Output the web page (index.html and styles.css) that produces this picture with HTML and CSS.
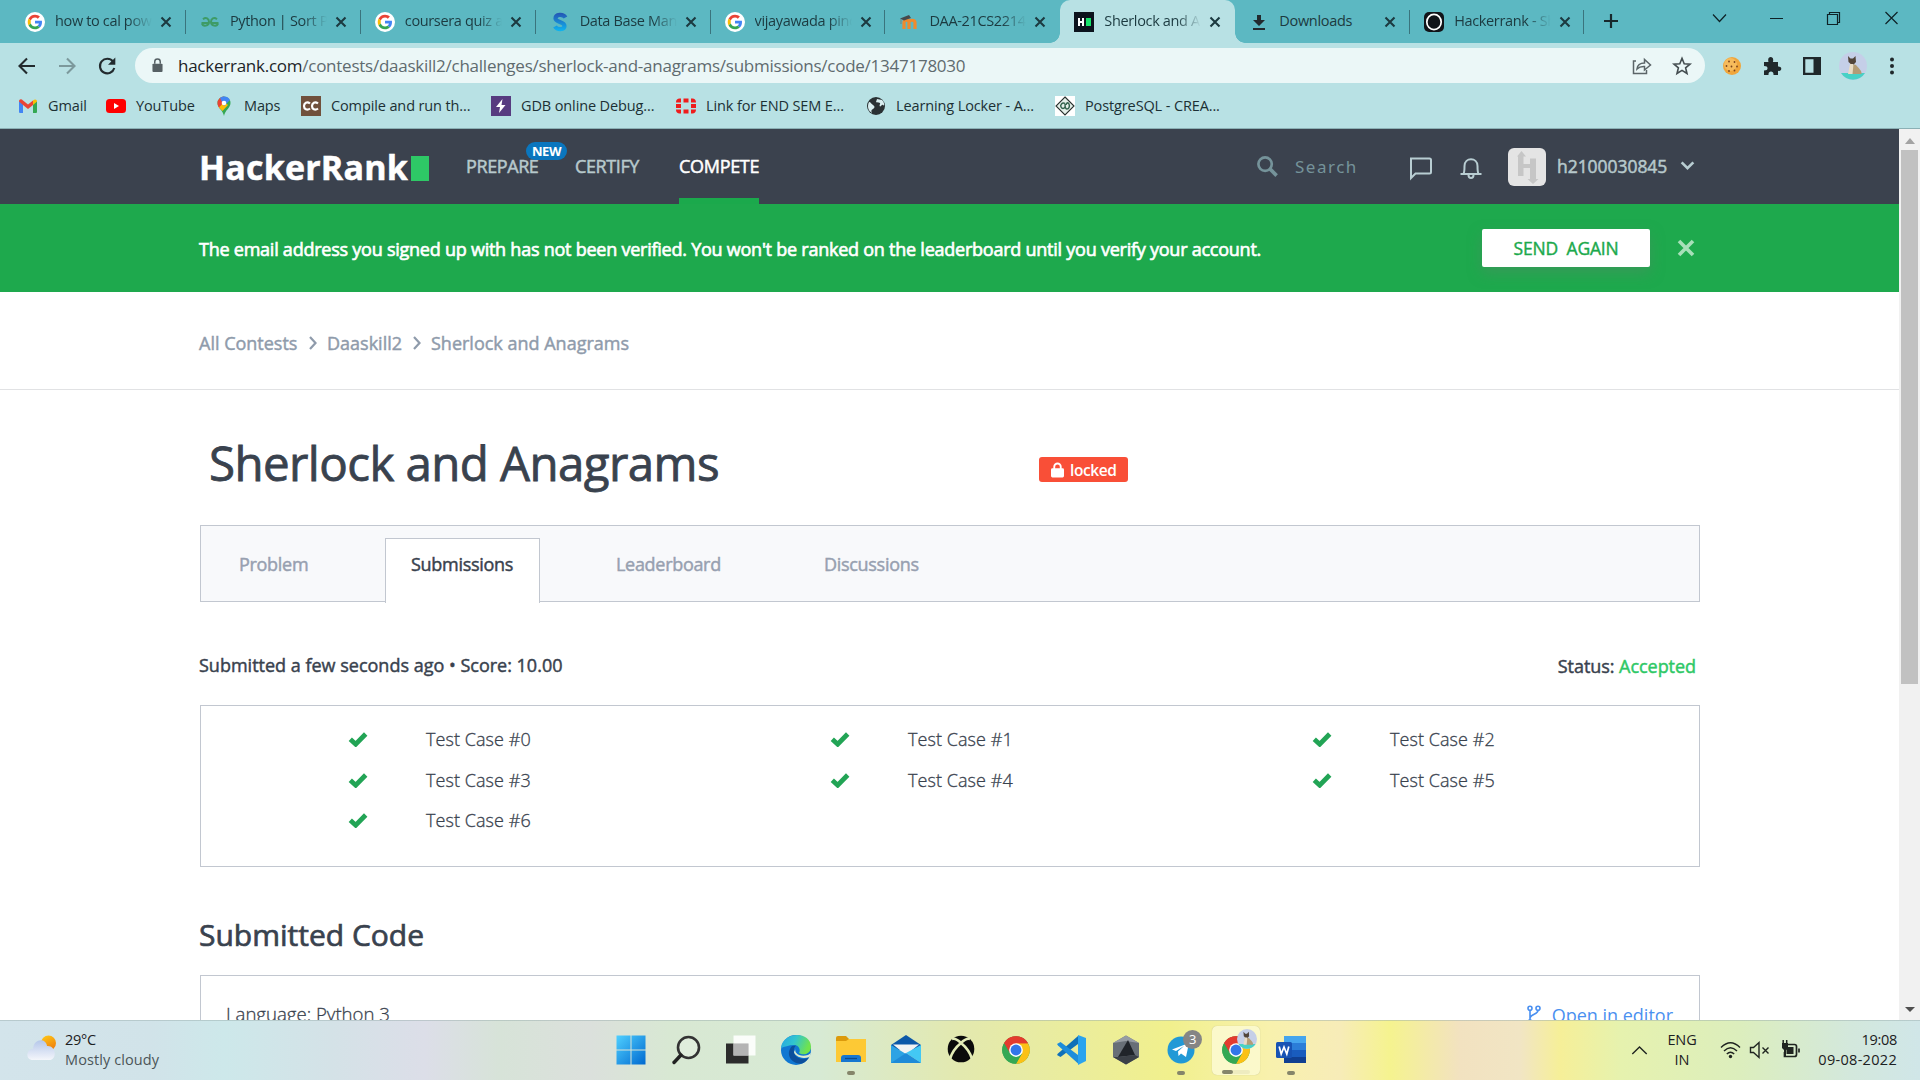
FILE: index.html
```html
<!DOCTYPE html>
<html lang="en">
<head>
<meta charset="utf-8">
<title>Sherlock and Anagrams</title>
<link rel="stylesheet" href="styles.css">
</head>
<body>
<svg class="defs" width="0" height="0" aria-hidden="true">
  <defs>
    <symbol id="x" viewBox="0 0 12 12"><path d="M1.5 1.5l9 9M10.5 1.5l-9 9" stroke="#1c3a40" stroke-width="2.1"/></symbol>
    <symbol id="google" viewBox="0 0 48 48"><circle cx="24" cy="24" r="24" fill="#fff"/><g transform="translate(6.5 6.5) scale(.73)"><path fill="#EA4335" d="M24 9.5c3.54 0 6.71 1.22 9.21 3.6l6.85-6.85C35.9 2.38 30.47 0 24 0 14.62 0 6.51 5.38 2.56 13.22l7.98 6.19C12.43 13.72 17.74 9.5 24 9.5z"/><path fill="#4285F4" d="M46.98 24.55c0-1.57-.15-3.09-.38-4.55H24v9.02h12.94c-.58 2.96-2.26 5.48-4.78 7.18l7.73 6c4.51-4.18 7.09-10.36 7.09-17.65z"/><path fill="#FBBC05" d="M10.53 28.59c-.48-1.45-.76-2.99-.76-4.59s.27-3.14.76-4.59l-7.98-6.19C.92 16.46 0 20.12 0 24c0 3.88.92 7.54 2.56 10.78l7.97-6.19z"/><path fill="#34A853" d="M24 48c6.48 0 11.93-2.13 15.89-5.81l-7.73-6c-2.15 1.45-4.92 2.3-8.16 2.3-6.26 0-11.57-4.22-13.47-9.91l-7.98 6.19C6.51 42.62 14.62 48 24 48z"/></g></symbol>
    <symbol id="check" viewBox="0 0 20 16"><path d="M2.3 8.2l5.4 5L17.700 3" fill="none" stroke="#22a455" stroke-width="4.8"/></symbol>
    <symbol id="chrome" viewBox="0 0 48 48"><circle cx="24" cy="24" r="22" fill="#34a853"/><path fill="#e33b2e" d="M24 24L4.9 13A22 22 0 0 1 43.1 13z"/><path fill="#fbc116" d="M24 13h19.1A22 22 0 0 1 24 46l9.5-16.5z"/><path fill="#e33b2e" d="M4.9 13L14.5 29.500 24 13h19.100A22 22 0 0 0 4.900 13z"/><path fill="#34a853" d="M4.900 13L14.500 29.500 24 34l9.500-4.500L24 46A22 22 0 0 1 4.900 13z"/><circle cx="24" cy="24" r="11" fill="#fff"/><circle cx="24" cy="24" r="8.700" fill="#3276e8"/></symbol>
    <symbol id="dog" viewBox="0 0 28 28"><circle cx="14" cy="14" r="14" fill="#c5cfe8"/><path d="M2 21h24a14 14 0 0 1-24 0z" fill="#48d1c6"/><path d="M11 11l6 2c2 3 6 5 5.500 9H11z" fill="#b39c76"/><path d="M9 4l2.500 2.500h2.500L16.500 4l.5 6-3.300 3.500L9.500 10z" fill="#51443a"/><path d="M11 12h3.500l-1 10H9z" fill="#e8dcc6"/></symbol>
  </defs>
</svg>

<header class="tabstrip">
  <div class="tab"><svg class="fav"><use href="#google"/></svg><span class="tt">how to cal power</span><svg class="cl"><use href="#x"/></svg></div>
  <div class="tab"><svg class="fav" viewBox="0 0 20 20"><g fill="none" stroke="#3e9b66" stroke-width="2"><path d="M9.500 11H1.500M3 7.200c3-2.400 6-.6 6 2.800 0 4.200-6 5-7 1.500M10.500 11h8M17 7.200c-3-2.400-6-.6-6 2.800 0 4.200 6 5 7 1.500"/></g></svg><span class="tt">Python | Sort Python</span><svg class="cl"><use href="#x"/></svg></div>
  <div class="tab"><svg class="fav"><use href="#google"/></svg><span class="tt">coursera quiz answers</span><svg class="cl"><use href="#x"/></svg></div>
  <div class="tab"><svg class="fav" viewBox="0 0 20 20"><path d="M15.500 5.500C13 1.500 5.500 2 5.500 6.500c0 4 9 3 9 7.500 0 4-7.500 4-9.500.5" fill="none" stroke="url(#sg)" stroke-width="4.200"/><defs><linearGradient id="sg" gradientUnits="userSpaceOnUse" x1="10" y1="1" x2="10" y2="19"><stop stop-color="#2456b4"/><stop offset="1" stop-color="#0fb4ef"/></linearGradient></defs></svg><span class="tt">Data Base Management</span><svg class="cl"><use href="#x"/></svg></div>
  <div class="tab"><svg class="fav"><use href="#google"/></svg><span class="tt">vijayawada pincode</span><svg class="cl"><use href="#x"/></svg></div>
  <div class="tab last-before"><svg class="fav" viewBox="0 0 20 20"><path d="M5 17V10.500c0-3 5-3 5 0V17m0-6.500c0-3 6-3 6 0V17" fill="none" stroke="#f08a2c" stroke-width="3.200"/><path d="M1 6.500l9-3.500 2 3-7 2.500z" fill="#46494d"/><path d="M2 7v5" stroke="#77817a"/></svg><span class="tt">DAA-21CS2214-AI</span><svg class="cl"><use href="#x"/></svg></div>
  <div class="tab active"><svg class="fav" viewBox="0 0 20 20"><path fill="#0c131d" d="M0 0h20v20H0z"/><path d="M5 6v8M9 6v8M5 10h4" stroke="#fff" stroke-width="2"/><path fill="#17e36b" d="M12 6h5v8h-5z"/></svg><span class="tt">Sherlock and Anagrams</span><svg class="cl"><use href="#x"/></svg></div>
  <div class="tab"><svg class="fav" viewBox="0 0 20 20"><path d="M8 3h4v5h4l-6 6-6-6h4zM4 16h12v2H4z" fill="#222a2e"/></svg><span class="tt full">Downloads</span><svg class="cl"><use href="#x"/></svg></div>
  <div class="tab"><svg class="fav" viewBox="0 0 20 20"><rect width="20" height="20" rx="5" fill="#111419"/><ellipse cx="10" cy="10" rx="7.200" ry="7.600" fill="#111419" stroke="#fff" stroke-width="1.700"/></svg><span class="tt">Hackerrank - Sherlock</span><svg class="cl"><use href="#x"/></svg></div>
  <svg class="plus" viewBox="0 0 16 16"><path d="M8 1v14M1 8h14" stroke="#17282c" stroke-width="2.200"/></svg>
  <svg class="win" viewBox="0 0 230 20" fill="none" stroke="#0e2226" stroke-width="1.200"><path d="M23 6.500l6.500 7 6.500-7M80 10.500h13M195.500 4l12 12M207.500 4l-12 12"/><path d="M137.500 6.500h10v10h-10zM139.500 6V4.500h10v10h-2"/></svg>
</header>

<div class="toolbar">
  <svg class="nav" viewBox="0 0 20 20"><path d="M18 10H3M10 2.500L2.500 10l7.500 7.500" fill="none" stroke="#222b2e" stroke-width="2.100"/></svg>
  <svg class="nav" viewBox="0 0 20 20"><path d="M2 10h15M10 2.500l7.500 7.500-7.500 7.500" fill="none" stroke="#7c999c" stroke-width="2.100"/></svg>
  <svg class="nav" viewBox="0 0 20 20"><path d="M16 5.500A7.300 7.300 0 1 0 17.300 12" fill="none" stroke="#222b2e" stroke-width="2.100"/><path d="M18.300 1.500v7.300H11z" fill="#222b2e"/></svg>
  <div class="omni">
    <svg class="lock" viewBox="0 0 12 16"><rect x="0.500" y="6" width="11" height="9" rx="1" fill="#566064"/><path d="M3 6V4a3 3 0 0 1 6 0v2" fill="none" stroke="#566064" stroke-width="1.600"/></svg>
    <span class="url"><b>hackerrank.com</b>/contests/daaskill2/challenges/sherlock-and-anagrams/submissions/code/1347178030</span>
    <svg class="oi" viewBox="0 0 20 20" fill="none" stroke="#5b6568" stroke-width="1.500"><path d="M4 5H1.500v12.500h13V14M5 13c.5-4.500 3-6 7.500-6V3.500L18.500 9l-6 5v-3.500C9.500 10.300 7 11 5 13z"/></svg>
    <svg class="oi" viewBox="0 0 20 20" fill="none" stroke="#444d50" stroke-width="1.600"><path d="M10 2.300l2.200 5.400 5.800.4-4.400 3.700 1.400 5.700-5-3.100-5 3.100 1.400-5.700L2 8.100l5.800-.4z"/></svg>
  </div>
  <svg class="ext" viewBox="0 0 20 20"><circle cx="10" cy="10" r="9" fill="#f0a63c"/><circle cx="8.500" cy="8.500" r="6.500" fill="#f6bb5c"/><g fill="#7a431c"><circle cx="7" cy="5.500" r=".9"/><circle cx="12.500" cy="6" r=".9"/><circle cx="4.500" cy="10" r=".9"/><circle cx="9.500" cy="10.500" r=".9"/><circle cx="15" cy="10.500" r=".9"/><circle cx="7" cy="15" r=".9"/><circle cx="12.500" cy="14.500" r=".9"/></g></svg>
  <svg class="ext" viewBox="0 0 20 20"><path d="M2 6h4.500C5.500 2.500 7 1 8.700 1s3.200 1.500 2.200 5H16v4.500c2 0 3.300.8 3.300 2.200S18 15 16 15v4h-4.500c.2-2.500-1-3.500-2.500-3.500S6.300 16.500 6.500 19H2v-4.500c2.500 0 3.500-1 3.500-2.300S4.500 10 2 10z" fill="#20282b"/></svg>
  <svg class="ext" viewBox="0 0 20 20"><path fill-rule="evenodd" d="M1 1h18v18H1zM3.300 3.300v13.400h8.200V3.300z" fill="#20282b"/></svg>
  <svg class="ava"><use href="#dog"/></svg>
  <svg class="ext" viewBox="0 0 20 20" fill="#20282b"><circle cx="10" cy="3.500" r="2"/><circle cx="10" cy="10" r="2"/><circle cx="10" cy="16.500" r="2"/></svg>
</div>

<nav class="bookmarks">
  <a><svg viewBox="0 0 20 20"><path fill="#4285f4" d="M1 5l4 3v9H2a1 1 0 0 1-1-1z"/><path fill="#34a853" d="M19 5l-4 3v9h3a1 1 0 0 0 1-1z"/><path fill="#fbbc04" d="M15 4.500C17 2.500 19 3.500 19 5.500L15 9z"/><path fill="#ea4335" d="M5 4.500l5 4 5-4V9l-5 4-5-4-4-3.500C1 3 3.500 2.700 5 4.500z"/></svg>Gmail</a>
  <a><svg viewBox="0 0 20 20"><rect y="3" width="20" height="14" rx="3.500" fill="#f00"/><path d="M8 7l5 3-5 3z" fill="#fff"/></svg>YouTube</a>
  <a><svg viewBox="0 0 20 20"><path d="M10 20C9 14 3.500 12 3.500 7a6.500 6.500 0 0 1 13 0c0 5-5.500 7-6.500 13z" fill="#34a853"/><path d="M3.500 7A6.500 6.500 0 0 1 10 .5L10 7l-4.500 5.500C4.200 10.500 3.500 9 3.500 7z" fill="#ea4335"/><path d="M5 11.500L10 6l4 3-5.500 6z" fill="#fbbc04"/><path d="M6 2C9-.5 14 0 16 4l-6 6z" fill="#4285f4"/><circle cx="10" cy="7" r="2.300" fill="#fff"/></svg>Maps</a>
  <a><svg viewBox="0 0 20 20"><path fill="#70503c" d="M0 0h20v20H0z"/><path d="M9 7.500C6 5 3 7 3 10s3 5 6 2.500M17 7.500C14 5 11 7 11 10s3 5 6 2.500" fill="none" stroke="#fff" stroke-width="2.200"/></svg>Compile and run th...</a>
  <a><svg viewBox="0 0 20 20"><path fill="#573b80" d="M0 0h20v20H0z"/><path fill="#fff" d="M11.500 3L5 11h4l-1 6 6.500-8h-4z"/></svg>GDB online Debug...</a>
  <a><svg viewBox="0 0 20 20"><path fill="#ee1c1c" d="M0 8h5v4H0zM15 8h5v4h-5zM7.500 2.500h5v4h-5zM7.500 13.500h5v4h-5zM0 6c0-2 1.500-3.500 3.500-3.500H5v4H0zM0 13.500h5v4H3.500C1.500 17.500 0 16 0 14zM15 2.500h1.500C18.500 2.500 20 4 20 6.500h-5zM15 13.500h5c0 2.500-1.500 4-3.500 4H15z"/></svg>Link for END SEM E...</a>
  <a><svg viewBox="0 0 20 20"><circle cx="10" cy="10" r="9" fill="#2a3134"/><path fill="#d9eef0" d="M3 6c2 0 2 2 4 3s2 3 0 4-2 2-1 4C2 15 1 10 3 6zM11 3l5 1c2 2 2.500 4 2 6-1-2-2-1-3 0s-2 0-1-2-3-1-4-2z"/></svg>Learning Locker - A...</a>
  <a><svg viewBox="0 0 20 20"><path fill="#fff" d="M0 0h20v20H0z"/><path d="M10 1l9 9-9 9-9-9z" fill="#e4efe9" stroke="#28312e" stroke-width="1.100"/><path d="M10 7.500C7 6 5 9 6 11s3 2 4 0m0-3c0 3 0 5 2 5s3-3 2-5-3-1-3 1" fill="none" stroke="#35644e" stroke-width="1.500"/></svg>PostgreSQL - CREA...</a>
</nav>

<div class="view">
  <main class="page">
    <div class="hr-nav">
      <div class="logo"><span>HackerRank</span><i></i></div>
      <div class="menu"><a>PREPARE<em>NEW</em></a><a>CERTIFY</a><a class="on">COMPETE</a></div>
      <div class="search"><svg viewBox="0 0 24 24"><circle cx="9.500" cy="9.500" r="7" fill="none" stroke="#75939a" stroke-width="2.800"/><path d="M14.500 14.500l7 7" stroke="#75939a" stroke-width="3.800"/></svg><span>Search</span></div>
      <svg class="ic chat" viewBox="0 0 24 24"><path d="M2 2.500h18.500a1.500 1.500 0 0 1 1.500 1.500v12a1.500 1.500 0 0 1-1.500 1.500H6.500L2 22z" fill="none" stroke="#b8cdd2" stroke-width="2"/></svg>
      <svg class="ic bell" viewBox="0 0 24 24" fill="none" stroke="#b8cdd2" stroke-width="2"><path d="M1.500 18h21M4.500 18c1-2 1-4 1-8 0-9 13-9 13 0 0 4 0 6 1 8M9.500 19c0 4 5 4 5 0"/></svg>
      <svg class="pic" viewBox="0 0 38 38"><rect width="38" height="38" rx="6" fill="#e4e4e4"/><g fill="#c6c6c6"><path d="M9 8.500L13.500 3 18 8.500H15.500V16H22V10.500h6V31h2.500L25 36 19.500 31H22V20h-6.500v8H10V8.500z"/></g></svg>
      <span class="user">h2100030845</span>
      <svg class="caret" viewBox="0 0 16 10"><path d="M1.500 1.500L8 8l6.500-6.500" fill="none" stroke="#b8cdd2" stroke-width="2.900"/></svg>
    </div>
    <div class="banner">
      <p>The email address you signed up with has not been verified. You won't be ranked on the leaderboard until you verify your account.</p>
      <button>SEND&nbsp; AGAIN</button>
      <svg viewBox="0 0 18 18"><path d="M2 2l14 14M16 2L2 16" stroke="#a7e0b9" stroke-width="3.600"/></svg>
    </div>
    <div class="crumbs">
      <a>All Contests</a><svg viewBox="0 0 8 14"><path d="M1 1l5.500 6L1 13" fill="none" stroke="#8f9bab" stroke-width="2.200"/></svg>
      <a>Daaskill2</a><svg viewBox="0 0 8 14"><path d="M1 1l5.500 6L1 13" fill="none" stroke="#8f9bab" stroke-width="2.200"/></svg>
      <a>Sherlock and Anagrams</a>
    </div>
    <div class="title">
      <h1>Sherlock and Anagrams</h1>
      <span class="locked"><svg viewBox="0 0 14 16"><rect y="6" width="14" height="10" rx="1.500" fill="#fff"/><path d="M3.500 7V4.500a3.500 3.500 0 0 1 7 0V7" fill="none" stroke="#fff" stroke-width="2"/></svg><span>locked</span></span>
    </div>
    <div class="ptabs"><a>Problem</a><a class="on">Submissions</a><a>Leaderboard</a><a>Discussions</a></div>
    <div class="meta"><span class="sub">Submitted a few seconds ago • Score: 10.00</span><span class="status">Status: <b>Accepted</b></span></div>
    <div class="cases">
      <div><svg><use href="#check"/></svg>Test Case #0</div><div><svg><use href="#check"/></svg>Test Case #1</div><div><svg><use href="#check"/></svg>Test Case #2</div>
      <div><svg><use href="#check"/></svg>Test Case #3</div><div><svg><use href="#check"/></svg>Test Case #4</div><div><svg><use href="#check"/></svg>Test Case #5</div>
      <div><svg><use href="#check"/></svg>Test Case #6</div>
    </div>
    <h2>Submitted Code</h2>
    <div class="code"><span class="langname">Language: Python 3</span><a><svg viewBox="0 0 14 20" fill="none" stroke="#4a90f0" stroke-width="1.600"><circle cx="3" cy="3.300" r="2"/><circle cx="11" cy="3.300" r="2"/><circle cx="3" cy="17" r="2"/><path d="M3 5.500V15M11 5.500c0 4-8 3.500-8 8"/></svg><span>Open in editor</span></a></div>
  </main>
  <aside class="scroll"><i class="up"></i><i class="thumb"></i><i class="down"></i></aside>
</div>

<footer class="taskbar">
  <svg class="weather" viewBox="0 0 30 26"><defs><linearGradient id="sun" x2=".5" y2="1"><stop stop-color="#ffcc18"/><stop offset="1" stop-color="#f0820e"/></linearGradient><linearGradient id="cl" x2="0" y2="1"><stop stop-color="#b5c7ea"/><stop offset="1" stop-color="#f4f6fb"/></linearGradient></defs><circle cx="21.500" cy="8" r="7.500" fill="url(#sun)"/><path d="M6 25c-8 0-7-11 0-11C7 3 19 3 20 11c9-1 11 14 2 14z" fill="url(#cl)"/></svg>
  <div class="wtext"><span>29°C</span><span class="dim">Mostly cloudy</span></div>
  <div class="apps">
    <div><svg viewBox="0 0 30 30"><defs><linearGradient id="w" x2="1" y2="1"><stop stop-color="#4fd0ff"/><stop offset="1" stop-color="#0069d0"/></linearGradient></defs><path d="M.5.5h14v14H.500zM15.500.5h14v14h-14zM.5 15.500h14v14H.500zM15.500 15.500h14v14h-14z" fill="url(#w)"/></svg></div>
    <div><svg viewBox="0 0 30 30"><circle cx="17.500" cy="12.500" r="10.500" fill="#eef5ea" fill-opacity=".4" stroke="#333" stroke-width="2.600"/><path d="M10 20l-7 7.500" stroke="#222" stroke-width="3.400" stroke-linecap="round"/></svg></div>
    <div><svg viewBox="0 0 30 30"><path fill="#2c2c2c" d="M0 8.500h22.500v20H0z"/><path fill="#fff" d="M7.500.5h22v20h-22z" fill-opacity=".88"/><path fill="#b4b4b4" d="M7.500 8.500h15v12h-15z"/></svg></div>
    <div><svg viewBox="0 0 30 30"><defs><linearGradient id="e" x2="1" y2=".3"><stop stop-color="#25a5e4"/><stop offset=".5" stop-color="#31c5cf"/><stop offset="1" stop-color="#70e34d"/></linearGradient></defs><circle cx="15" cy="15" r="15" fill="#1077d2"/><path d="M0 13C2-4 30-4 30 12c0 7-8 9-12 6 2-3 0-8-5-8S3 12 0 13z" fill="url(#e)"/><path d="M11 11c-8 9 1 19 10 17.500 3-1 5-3 7-6-5 3-14 1-15-5-.5-3 0-5 2-7z" fill="#0d4f9c"/><path d="M15 13c-3 4 3 10 12 7l3-2-1.500 4c-9 3-15-2-15.500-5z" fill="#e0eccf"/></svg></div>
    <div class="run"><svg viewBox="0 0 30 30"><path fill="#dc9a0c" d="M0 3q0-2 2-2h8l3 3v5H0z"/><path fill="#fdc935" d="M0 6h10l3-2h17v23H0z"/><path fill="#1677d0" d="M5 27v-4q0-3 3-3h14q3 0 3 3v4z"/><path d="M9 23.500h12" stroke="#0b4a8c" stroke-width="1.300"/></svg></div>
    <div><svg viewBox="0 0 30 30"><path fill="#0c58a8" d="M0 10L15 0l15 10v5H0z"/><path fill="#f3f3f3" d="M2 9.500h26L15 20z"/><path fill="#2da3e4" d="M0 10l30 18H0z"/><path fill="#43c8f4" d="M30 10v18L15 18z"/><path fill="#1e8bd8" d="M0 28l15-10 15 10z"/></svg></div>
    <div><svg viewBox="0 0 30 30"><circle cx="15" cy="14" r="13.300" fill="#0b0b0b"/><path d="M4 24C6 17 10 12 15 8c5 4 9 9 11 16M6 4c3-1 6 1 9 4 3-3 6-5 9-4" fill="none" stroke="#e3ecb7" stroke-width="2.600"/></svg></div>
    <div><svg viewBox="0 0 30 30"><use href="#chrome"/></svg></div>
    <div><svg viewBox="0 0 30 30"><path fill="#0f70b8" d="M2 18.500L22 1v8L4.500 22 1 20z"/><path fill="#1d8ddb" d="M2 10.500L22 28.500V20L4.500 7 1 9z"/><path fill="#2aa3ee" d="M22 0l8 3v23l-8 4z"/></svg></div>
    <div><svg viewBox="0 0 30 30"><path fill="#686f77" d="M15 .5L28 8v14l-13 7.500L2 22V8z"/><path fill="#969ca3" d="M15 .5L28 8 15 6 2 8z"/><path fill="#20242a" d="M17 5l7 15-17 2z"/><path fill="#3b4047" d="M2 22l5 0 17-2 4 2-13 7.500z"/></svg></div>
    <div class="run"><svg viewBox="0 0 30 30"><circle cx="15" cy="15" r="13.500" fill="#2199d6"/><path fill="#fff" d="M6 14.500L23 8l-3 14-5-3.500-2.500 2.500-.5-4.500 6-5.500-8 5z"/></svg><span class="badge">3</span></div>
    <div class="cur"><svg viewBox="0 0 30 30"><use href="#chrome"/></svg><svg class="mini"><use href="#dog"/></svg></div>
    <div class="run"><svg viewBox="0 0 30 30"><path fill="#45a5ee" d="M8 1h22v7H8z"/><path fill="#2b7dd8" d="M8 8h22v7H8z"/><path fill="#195cbe" d="M8 15h22v7H8z"/><path fill="#103f91" d="M8 22h22v6H8z"/><rect y="7" width="16" height="16" rx="1.500" fill="#1753b4"/><path d="M3.200 11.500l2 7.500L8 12l2.800 7 2-7.500" fill="none" stroke="#fff" stroke-width="1.700"/></svg></div>
  </div>
  <svg class="chev" viewBox="0 0 18 10"><path d="M1 9l8-8 8 8" fill="none" stroke="#1f2420" stroke-width="1.500"/></svg>
  <div class="lang"><span>ENG</span><span>IN</span></div>
  <svg class="tray" viewBox="0 0 78 20" fill="none" stroke="#1f2420" stroke-width="1.400"><path d="M0.500 7.500q9.500-9.500 19 0M3.500 11q6.500-6.500 13 0M6.300 14q3.700-3.700 7.400 0"/><circle cx="10" cy="16.500" r="1.700" fill="#1f2420" stroke="none"/><path d="M30 7.500h3L38.500 2.500v15L33 12.500h-3zM42 7.500l6 6M48 7.500l-6 6"/><path d="M66 4.500h8q2 0 2 2v8q0 2-2 2H64V12M78.500 8.500v4" stroke-width="1.700"/><path fill="#1f2420" d="M66 7h7v7h-7zM61.500 3h6v5l-2 2v6h-2v-6l-2-2z" stroke="none"/><path d="M62.700 0v4M66.200 0v4" stroke-width="1.500"/></svg>
  <div class="clock"><span>19:08</span><span class="date">09-08-2022</span></div>
</footer>
</body>
</html>
```
FILE: styles.css
```css
* { box-sizing: border-box; }
html, body { margin: 0; width: 1920px; height: 1080px; overflow: hidden; }
body { display: flex; flex-direction: column; font-family: "Open Sans", "Noto Sans", sans-serif; color: #39424e; background: #fff; }
svg { display: block; flex: none; overflow: visible; }
.defs { position: absolute; }
span, a { white-space: nowrap; }

/* browser tab strip */
.tabstrip { display: flex; height: 43px; padding-left: 11px; background: #5cb8c2; flex: none; }
.tab { position: relative; display: flex; align-items: center; width: 174.9px; height: 43px; padding-left: 14px; flex: none; }
.tab:not(.active):not(.last-before)::after { content: ""; position: absolute; right: 0; top: 10px; width: 1px; height: 24px; background: #3a747d; }
.tab.active { background: #b8e1e4; border-radius: 10px 10px 0 0; }
.tab.active::before, .tab.active::after { content: ""; position: absolute; bottom: 0; width: 10px; height: 10px; }
.tab.active::before { left: -10px; background: radial-gradient(circle at 0 0, transparent 9.5px, #b8e1e4 10px); }
.tab.active::after { right: -10px; background: radial-gradient(circle at 100% 0, transparent 9.5px, #b8e1e4 10px); }
.fav { width: 20px; height: 20px; margin-right: 10px; }
.tt { width: 97px; height: 24px; line-height: 24px; overflow: hidden; font-size: 14.5px; letter-spacing: -.35px; color: #1c3a40; -webkit-mask-image: linear-gradient(90deg, #000 75%, transparent 100%); margin-bottom: 2px; }
.tt.full { -webkit-mask-image: none; letter-spacing: -.3px; }
.cl { width: 12px; height: 12px; margin-left: 8px; }
.tab:nth-child(9) { width: 174px; }
.plus { width: 16px; height: 16px; margin: 13px 0 0 18.7px; }
.win { width: 230px; height: 20px; margin: 8px 0 0 71px; }

/* address bar */
.toolbar { display: flex; align-items: center; height: 45px; padding: 0 0 0 17px; background: #b8e1e4; flex: none; }
.nav { width: 20px; height: 20px; margin-right: 20px; }
.nav + .nav + .nav { margin-right: 18px; margin-left: 0; }
.omni { display: flex; align-items: center; width: 1570px; height: 35px; border-radius: 18px; background: #ebf7f7; padding-left: 17px; margin-right: 17px; flex: none; }
.lock { width: 11px; height: 15px; margin-right: 15px; }
.url { width: 1454px; flex: none; font-size: 17px; letter-spacing: -.25px; color: #5f6b6f; }
.url b { font-weight: 400; color: #1d2528; }
.oi { width: 20px; height: 20px; margin-right: 20px; }
.ext { width: 20px; height: 20px; margin-right: 20px; }
.ava { width: 28px; height: 28px; margin: 0 15px 0 -3px; }

.bookmarks { display: grid; grid-template-columns: 88px 108px 87px 190px 185px 190px 189px 200px; height: 41px; padding: 0 0 6px 18px; align-items: center; background: #b8e1e4; border-bottom: 1px solid #8bb0b5; flex: none; }
.bookmarks a { display: flex; align-items: center; gap: 10px; font-size: 14.5px; letter-spacing: -.12px; color: #1c3034; }
.bookmarks svg { width: 20px; height: 20px; margin-top: 2px; }

/* page area */
.view { display: flex; height: 891px; overflow: hidden; flex: none; }
.page { width: 1899px; height: 891px; overflow: hidden; flex: none; }
.hr-nav { display: flex; align-items: center; height: 75px; padding-left: 199px; background: #3b424e; }
.logo { display: flex; width: 267px; align-items: center; }
.logo span { width: 212px; font-size: 34px; font-weight: 700; line-height: 40px; letter-spacing: .2px; color: #fff; -webkit-text-stroke: .5px; }
.logo i { width: 18px; height: 25px; background: #2ec866; margin-top: 3px; }
.menu { display: grid; grid-template-columns: 109px 104px 80px; height: 75px; width: 790px; }
.menu a { position: relative; height: 75px; font-size: 18px; line-height: 75px; letter-spacing: -.4px; color: #b7c9cc; -webkit-text-stroke: .5px; }
.menu .on { color: #fff; border-bottom: 6px solid #1ba94c; letter-spacing: -.3px; }
.menu em { position: absolute; left: 60px; top: 13px; width: 41px; height: 18px; border-radius: 9px; background: #0a76be; color: #fff; font: 700 13px/18px "Open Sans", sans-serif; letter-spacing: -.4px; text-align: center; -webkit-text-stroke: 0; }
.search { display: flex; align-items: center; gap: 16px; width: 152px; font: 17px "Noto Sans", sans-serif; letter-spacing: 1.5px; color: #75939a; }
.search svg { width: 23px; height: 23px; }
.chat { width: 24px; height: 24px; margin: 3px 0 0 1px; }
.bell { width: 24px; height: 24px; margin: 2px 25px 0 26px; }
.pic { width: 38px; height: 38px; }
.user { width: 112px; margin: 0 11px 2px; font-size: 17.5px; letter-spacing: -.05px; color: #b7c9cc; -webkit-text-stroke: .5px; }
.caret { width: 15px; height: 9px; margin-bottom: 2px; }
.banner { display: flex; align-items: center; height: 88px; padding-left: 199px; background: #1ea94d; }
.banner p { margin: 1px 0 0; width: 1283px; font-size: 18px; letter-spacing: -.24px; color: #fff; white-space: nowrap; -webkit-text-stroke: .65px; }
.banner button { width: 168px; height: 38px; padding: 0; border: 0; border-radius: 2px; background: #fff; color: #1ba94c; font: 17.5px "Open Sans", sans-serif; -webkit-text-stroke: .4px; letter-spacing: -.2px; box-shadow: 0 6px 14px rgba(80,140,100,.5); }
.banner svg { width: 18px; height: 18px; margin-left: 27px; }
.crumbs { display: grid; grid-template-columns: 109.500px 18.500px 86px 18px auto; align-items: center; height: 98px; padding: 4px 0 0 199px; border-bottom: 1px solid #e1e2e4; font-size: 18px; letter-spacing: 0; color: #8f9bab; -webkit-text-stroke: .45px; }
.crumbs svg { width: 8px; height: 14px; }
.title { display: flex; height: 135px; padding-left: 209px; }
h1 { width: 830px; margin: 40px 0 0; font-size: 47.5px; line-height: 66px; font-weight: 400; letter-spacing: -.6px; -webkit-text-stroke: .8px; }
.locked { display: flex; align-items: center; width: 89px; height: 25px; margin-top: 67px; padding: 1px 0 0 12px; gap: 6px; border-radius: 3px; background: #f94f37; color: #fff; font-size: 15.5px; font-weight: 600; letter-spacing: -.4px; }
.locked svg { width: 13px; height: 16px; }
.ptabs { display: flex; width: 1500px; height: 77px; margin-left: 200px; border: 1px solid #c2c7d0; background: #f8f9fb; font-size: 18px; letter-spacing: -.3px; color: #97a0b0; line-height: 50px; -webkit-text-stroke: .45px; }
.ptabs a { padding: 13px 0 0 38px; width: 184px; height: 75px; }
.ptabs .on { width: 155px; height: 65px; margin-top: 12px; padding: 0 0 0 25px; background: #fff; border: 1px solid #c2c7d0; border-bottom: 0; color: #39424e; z-index: 1; }
.ptabs .on + a { padding-left: 76px; width: 284px; }
.ptabs .on + a + a { padding-left: 0; }
.meta { display: flex; justify-content: space-between; align-items: center; height: 103px; width: 1497px; margin-left: 199px; padding-top: 22px; font-size: 18px; letter-spacing: 0; -webkit-text-stroke: .45px; }
.status { letter-spacing: -.05px; margin-top: 2px; }
.status b { font-weight: 400; color: #2ec866; }
.cases { display: grid; grid-template-columns: 482px 482px 400px; grid-auto-rows: 40.5px; width: 1500px; height: 162px; margin-left: 200px; padding: 13px 0 0 147px; border: 1px solid #c2c7d0; font-size: 18px; font-weight: 300; letter-spacing: .07px; -webkit-text-stroke: .3px; }
.cases div { display: flex; align-items: center; }
.cases svg { width: 20px; height: 16px; margin-right: 58px; }
h2 { height: 108px; margin: 0 0 0 199px; font-size: 30px; line-height: 136px; font-weight: 400; -webkit-text-stroke: .7px; }
.code { display: flex; justify-content: space-between; width: 1500px; height: 120px; margin-left: 200px; padding: 26px 26px 0 25px; border: 1px solid #c2c7d0; font-size: 18px; line-height: 26px; font-weight: 300; }
.langname { font-size: 18.6px; line-height: 24px; -webkit-text-stroke: .3px; }
.code a { display: flex; gap: 11px; color: #4a90f0; font-weight: 400; }
.code svg { width: 14px; height: 20px; margin-top: 3px; }
.scroll { width: 21px; height: 891px; display: flex; flex-direction: column; align-items: center; background: #f1f1f1; }
.up { border: 6px solid transparent; border-top: 0; border-bottom: 6px solid #a3a3a3; border-left-width: 5px; border-right-width: 5px; margin: 9px 0 6px; }
.thumb { width: 17px; height: 534px; background: #c1c1c1; }
.down { margin-top: auto; margin-bottom: 8px; border: 5px solid transparent; border-bottom: 0; border-top: 5px solid #505050; }

/* taskbar */
.taskbar { display: flex; align-items: center; height: 60px; padding: 0 0 1px 27px; border-top: 1px solid rgba(150,170,170,.45); font-size: 14.5px; letter-spacing: -.3px; color: #1c2022; flex: none;
  background: linear-gradient(90deg, #d3e4eb 0, #d1e3e9 150px, #cde8ea 225px, #d4e2e7 330px, #dcdee8 425px, #d7e3d8 500px, #dbe0dc 590px, #d8e8d3 670px, #d7ead4 820px, #e3e9af 960px, #f1f08d 1170px, #f8f1ad 1270px, #f7ecb8 1340px, #f5f38f 1390px, #f2e2c0 1460px, #f1e5c4 1520px, #f6ef98 1560px, #e6f2ae 1620px, #dceebd 1740px, #d3e8dc 1850px, #d0e6e8 1920px); }
.weather { width: 30px; height: 26px; margin-top: -4px; }
.wtext, .lang, .clock { display: flex; flex-direction: column; line-height: 20px; }
.wtext { width: 546px; padding-left: 8px; }
.dim { color: #4c5558; letter-spacing: .1px; }
.apps { display: grid; grid-template-columns: repeat(13, 55px); height: 59px; }
.apps div { position: relative; display: flex; align-items: center; justify-content: center; }
.apps svg { width: 30px; height: 30px; }
.run::after { content: ""; position: absolute; left: 24px; bottom: 5px; width: 8px; height: 4px; border-radius: 2px; background: #85856a; }
.apps .cur { width: 48px; height: 49px; margin: 5px 0 0 4px; border-radius: 5px; background: #fbf9cb; box-shadow: 0 0 1px #bbb88a; }
.cur::after { content: ""; position: absolute; left: 10px; bottom: 1px; width: 11px; height: 4px; border-radius: 2px; background: #85856a; box-shadow: 10px 0 0 #eeecc0, 17px 0 0 #eeecc0; }
.apps .mini { position: absolute; left: 25px; top: 3px; width: 20px; height: 20px; }
.badge { position: absolute; left: 30px; top: 9px; width: 19px; height: 19px; border-radius: 50%; background: #858585; color: #fff; font-size: 13px; line-height: 19px; text-align: center; }
.chev { width: 17px; height: 9px; margin-left: 313px; }
.lang { width: 40px; margin-left: 14px; align-items: center; letter-spacing: -.1px; }
.tray { width: 79px; height: 20px; margin-left: 18px; }
.clock { width: 82px; margin-left: 16px; align-items: flex-end; }
.date { letter-spacing: .3px; }
```
